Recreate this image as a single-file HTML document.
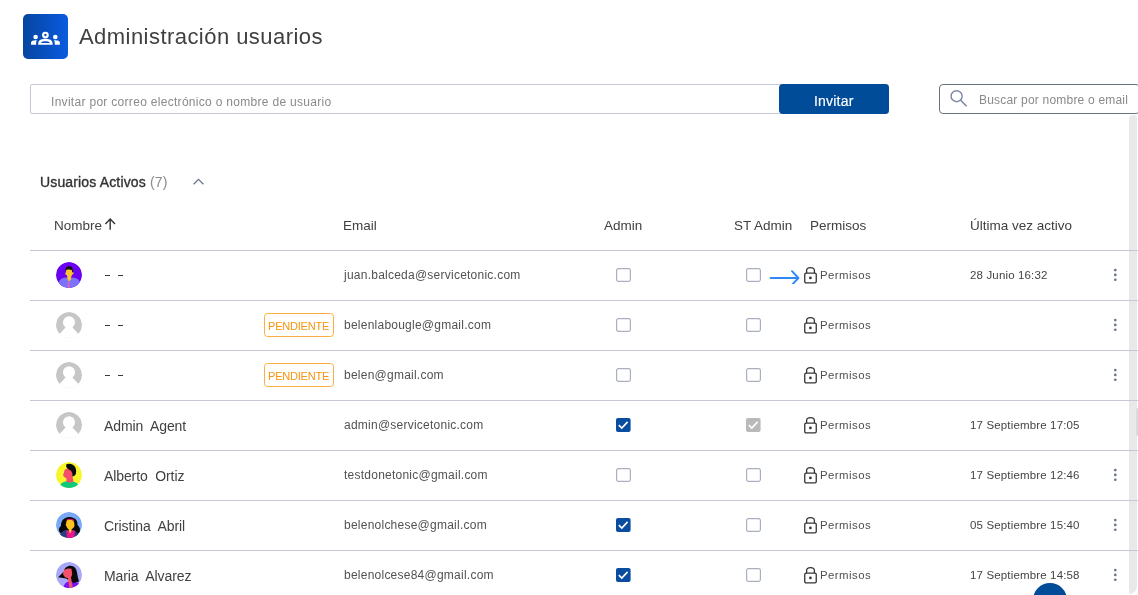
<!DOCTYPE html>
<html><head><meta charset="utf-8">
<style>
html,body{margin:0;padding:0;background:#fff;}
body{width:1138px;height:595px;overflow:hidden;position:relative;font-family:"Liberation Sans",sans-serif;color:#414141;}
.a{position:absolute;}
.t{position:absolute;line-height:1;white-space:pre;will-change:transform;}
.logo{left:23px;top:13.5px;width:45px;height:45px;border-radius:5px;background:linear-gradient(90deg,#0645a0,#0b5be0);}
.inp{left:30px;top:84px;width:857px;height:28px;border:1px solid #c5c9d6;border-radius:2px;}
.btn{left:779px;top:84px;width:110px;height:30px;background:#004c99;border-radius:4px;}
.srch{left:939px;top:84px;width:199px;height:28px;border:1px solid #6b7283;border-radius:4px;}
.thumb{left:1129px;top:115px;width:8px;height:479px;background:#e9e9e9;border-radius:4px 4px 8px 0;}
.line{position:absolute;left:30px;width:1108px;height:1px;background:#c6c8d3;}
.cb{position:absolute;width:12px;height:12px;border:1px solid #b3b9c6;border-radius:2px;background:#fff;}
.badge{position:absolute;width:68px;height:22px;border:1px solid #fdae40;border-radius:3.5px;}
.keb{position:absolute;width:2.6px;height:2.6px;border-radius:50%;background:#66728a;box-shadow:0 4.8px 0 #66728a,0 9.6px 0 #66728a;}
</style></head>
<body>
<div class="a logo"></div>
<svg class="a" style="left:23px;top:13.5px" width="45" height="45" viewBox="0 0 45 45"><g fill="#fff"><circle cx="22.4" cy="21.05" r="2.3" fill="none" stroke="#fff" stroke-width="2.2"/><circle cx="12.6" cy="23" r="2.3"/><circle cx="32.3" cy="23" r="2.3"/><path fill-rule="evenodd" d="M15.2,30.85 V29.4 C15.2,27.5 16.5,26.3 18,25.6 C19.4,25 20.8,24.75 22.4,24.75 C24,24.75 25.4,25 26.8,25.6 C28.3,26.3 29.6,27.5 29.6,29.4 V30.85 Z M17.9,29 C18.2,28.3 18.8,27.9 19.9,27.5 C20.7,27.25 21.5,27.15 22.4,27.15 C23.3,27.15 24.1,27.25 24.9,27.5 C26,27.9 26.6,28.3 26.9,29 Z"/><path d="M8,30.85 V29 C8,28 8.6,27.2 9.5,26.8 C10.5,26.4 11.5,26.2 12.6,26.2 C13.1,26.2 13.5,26.25 13.9,26.3 C13.4,27.1 13.1,28 13.1,29 V30.85 Z"/><path d="M36.9,30.85 V29 C36.9,28 36.3,27.2 35.4,26.8 C34.4,26.4 33.4,26.2 32.3,26.2 C31.8,26.2 31.4,26.25 31,26.3 C31.5,27.1 31.8,28 31.8,29 V30.85 Z"/></g></svg>
<div class="t" style="left:79px;top:26.4px;font-size:22px;color:#404040;letter-spacing:0.45px;">Administración usuarios</div>

<div class="a inp"></div>
<div class="t" style="left:51px;top:95.8px;font-size:12px;color:#8a8a8a;letter-spacing:0.3px;">Invitar por correo electrónico o nombre de usuario</div>
<div class="a btn"></div>
<div class="t" style="left:814px;top:93.5px;font-size:14px;color:#fff;-webkit-text-stroke:0.15px #fff;letter-spacing:0.2px;">Invitar</div>

<div class="a srch"></div>
<svg class="a" style="left:948px;top:88px" width="22" height="20" viewBox="0 0 22 20"><circle cx="8.6" cy="8.2" r="5.5" fill="none" stroke="#7b879e" stroke-width="1.4"/><path d="M12.6,12.3 L18.6,18.2" stroke="#7b879e" stroke-width="1.6"/></svg>
<div class="t" style="left:979px;top:94px;font-size:12px;color:#8a8a8a;letter-spacing:0.2px;">Buscar por nombre o email</div>

<div class="a thumb"></div>

<div class="t" style="left:40px;top:175px;font-size:14px;color:#333;letter-spacing:0.15px;"><span style="-webkit-text-stroke:0.35px #333">Usuarios Activos</span> <span style="color:#8a8a8a">(7)</span></div>
<svg class="a" style="left:192px;top:177px" width="13" height="9" viewBox="0 0 13 9"><path d="M1.6,7.2 L6.5,2.3 L11.4,7.2" fill="none" stroke="#6b7591" stroke-width="1.3"/></svg>

<div class="t" style="left:54px;top:219px;font-size:13.5px;">Nombre</div>
<svg class="a" style="left:103px;top:217px" width="14" height="14" viewBox="0 0 14 14"><path d="M7.2,12.8 V2.2 M2.4,6.9 L7.2,2.1 L12,6.9" fill="none" stroke="#333" stroke-width="1.4"/></svg>
<div class="t" style="left:343px;top:219px;font-size:13.5px;">Email</div>
<div class="t" style="left:604px;top:219px;font-size:13.5px;">Admin</div>
<div class="t" style="left:734px;top:219px;font-size:13.5px;">ST Admin</div>
<div class="t" style="left:809.5px;top:219px;font-size:13.5px;">Permisos</div>
<div class="t" style="left:970px;top:219px;font-size:13.5px;">Última vez activo</div>

<div class="line" style="top:250px"></div>
<div class="line" style="top:300px"></div>
<div class="line" style="top:350px"></div>
<div class="line" style="top:400px"></div>
<div class="line" style="top:450px"></div>
<div class="line" style="top:500px"></div>
<div class="line" style="top:550px"></div>

<svg class="a" style="left:56px;top:262px" width="26" height="26" viewBox="0 0 26 26"><defs><clipPath id="cp1275"><circle cx="13" cy="13" r="13"/></clipPath></defs><g clip-path="url(#cp1275)"><circle cx="13" cy="13" r="13" fill="#6c00f3"/><path d="M2.5,27 L2.8,21 C3.2,17.5 6,15.6 10,15.4 L16,15.4 C20.5,15.6 23.6,17.5 24,21 L24.3,27 Z" fill="#7b73f8"/><path d="M11.2,12.5 L15.2,12.5 L15,17.5 L12.8,19.5 L11.4,17 Z" fill="#fcc42d"/><path d="M10,8 C10,6.8 11.5,6 13,6 L16.6,6.4 L17,10 C17.8,10.2 18,11.2 17,12.3 L16.2,12.8 C16,14 15,14.8 13.5,14.8 C12.5,14.8 12,14.6 11.5,14.2 L11.2,13.3 L10,13 C9,12.2 9.2,11 10,10.3 Z" fill="#fcc42d"/><path d="M9.3,8.2 C9.2,5.5 11,4.2 13.2,4.2 C15.5,4.2 17.2,5.6 17,8.5 L16.9,10.6 L16.2,10.6 L15.8,8 C14.5,7.4 12.5,7.3 10.5,7.8 L10,9 Z" fill="#111"/><path d="M11.8,19.8 L13.3,19.8 L13.6,27 L11.6,27 Z" fill="#f05cc0"/></g></svg>
<div class="a" style="left:104.6px;top:275px;width:5.4px;height:1.2px;background:#3a3a3a"></div>
<div class="a" style="left:118px;top:275px;width:5.4px;height:1.2px;background:#3a3a3a"></div>
<div class="t" style="left:344px;top:268.6px;font-size:12px;color:#525252;letter-spacing:0.24px;">juan.balceda@servicetonic.com</div>
<svg class="a" style="left:616px;top:268px" width="15" height="14" viewBox="0 0 15 14"><rect x="0.6" y="0.6" width="13.8" height="12.8" rx="1.8" fill="#fff" stroke="#a9b0be" stroke-width="1.2"/></svg>
<svg class="a" style="left:746px;top:268px" width="15" height="14" viewBox="0 0 15 14"><rect x="0.6" y="0.6" width="13.8" height="12.8" rx="1.8" fill="#fff" stroke="#a9b0be" stroke-width="1.2"/></svg>
<svg class="a" style="left:768px;top:270px" width="34" height="14" viewBox="0 0 34 14"><path d="M2.6,8 H30.2 M24,1.2 L30.4,8 L24,14.8" fill="none" stroke="#2f88f8" stroke-width="1.9" stroke-linecap="round" stroke-linejoin="round"/></svg>
<svg class="a" style="left:804px;top:265.6px" width="14" height="18" viewBox="0 0 14 18"><rect x="0.75" y="7.1" width="11.5" height="9.7" rx="1.3" fill="none" stroke="#333" stroke-width="1.3"/><path d="M2.6,7.1 V4.6 C2.6,2.6 4.1,1.55 6.5,1.55 C8.9,1.55 10.4,2.6 10.4,4.6 V7.1" fill="none" stroke="#333" stroke-width="1.3"/><circle cx="6.4" cy="11.9" r="1.35" fill="#333"/></svg>
<div class="t" style="left:820px;top:269.5px;font-size:11.4px;color:#4e4e4e;letter-spacing:0.45px;">Permisos</div>
<div class="t" style="left:970px;top:270px;font-size:11.5px;color:#444;letter-spacing:0.15px;">28 Junio 16:32</div>
<svg class="a" style="left:1110px;top:265px" width="10" height="20" viewBox="0 0 10 20"><g fill="#6a758c"><circle cx="5.3" cy="5.1" r="1.35"/><circle cx="5.3" cy="9.95" r="1.35"/><circle cx="5.3" cy="14.75" r="1.35"/></g></svg>
<svg class="a" style="left:56px;top:312px" width="26" height="26" viewBox="0 0 26 26"><defs><clipPath id="cg325"><circle cx="13" cy="13" r="13"/></clipPath></defs><g clip-path="url(#cg325)"><circle cx="13" cy="13" r="13" fill="#c6c6c6"/><circle cx="13" cy="10.2" r="6" fill="#fff"/><path d="M10,14.6 C8.6,17.4 5.6,19.3 3.2,22.4 L2.6,27 L23.4,27 L22.8,22.4 C20.4,19.3 17.4,17.4 16,14.6 Z" fill="#fff"/></g></svg>
<div class="a" style="left:104.6px;top:325px;width:5.4px;height:1.2px;background:#3a3a3a"></div>
<div class="a" style="left:118px;top:325px;width:5.4px;height:1.2px;background:#3a3a3a"></div>
<div class="badge" style="left:264px;top:313px"></div>
<div class="t" style="left:268px;top:320.5px;font-size:11px;color:#f7940c;letter-spacing:-0.2px;">PENDIENTE</div>
<div class="t" style="left:344px;top:318.6px;font-size:12px;color:#525252;letter-spacing:0.24px;">belenlabougle@gmail.com</div>
<svg class="a" style="left:616px;top:318px" width="15" height="14" viewBox="0 0 15 14"><rect x="0.6" y="0.6" width="13.8" height="12.8" rx="1.8" fill="#fff" stroke="#a9b0be" stroke-width="1.2"/></svg>
<svg class="a" style="left:746px;top:318px" width="15" height="14" viewBox="0 0 15 14"><rect x="0.6" y="0.6" width="13.8" height="12.8" rx="1.8" fill="#fff" stroke="#a9b0be" stroke-width="1.2"/></svg>
<svg class="a" style="left:804px;top:315.6px" width="14" height="18" viewBox="0 0 14 18"><rect x="0.75" y="7.1" width="11.5" height="9.7" rx="1.3" fill="none" stroke="#333" stroke-width="1.3"/><path d="M2.6,7.1 V4.6 C2.6,2.6 4.1,1.55 6.5,1.55 C8.9,1.55 10.4,2.6 10.4,4.6 V7.1" fill="none" stroke="#333" stroke-width="1.3"/><circle cx="6.4" cy="11.9" r="1.35" fill="#333"/></svg>
<div class="t" style="left:820px;top:319.5px;font-size:11.4px;color:#4e4e4e;letter-spacing:0.45px;">Permisos</div>
<svg class="a" style="left:1110px;top:315px" width="10" height="20" viewBox="0 0 10 20"><g fill="#6a758c"><circle cx="5.3" cy="5.1" r="1.35"/><circle cx="5.3" cy="9.95" r="1.35"/><circle cx="5.3" cy="14.75" r="1.35"/></g></svg>
<svg class="a" style="left:56px;top:362px" width="26" height="26" viewBox="0 0 26 26"><defs><clipPath id="cg375"><circle cx="13" cy="13" r="13"/></clipPath></defs><g clip-path="url(#cg375)"><circle cx="13" cy="13" r="13" fill="#c6c6c6"/><circle cx="13" cy="10.2" r="6" fill="#fff"/><path d="M10,14.6 C8.6,17.4 5.6,19.3 3.2,22.4 L2.6,27 L23.4,27 L22.8,22.4 C20.4,19.3 17.4,17.4 16,14.6 Z" fill="#fff"/></g></svg>
<div class="a" style="left:104.6px;top:375px;width:5.4px;height:1.2px;background:#3a3a3a"></div>
<div class="a" style="left:118px;top:375px;width:5.4px;height:1.2px;background:#3a3a3a"></div>
<div class="badge" style="left:264px;top:363px"></div>
<div class="t" style="left:268px;top:370.5px;font-size:11px;color:#f7940c;letter-spacing:-0.2px;">PENDIENTE</div>
<div class="t" style="left:344px;top:368.6px;font-size:12px;color:#525252;letter-spacing:0.24px;">belen@gmail.com</div>
<svg class="a" style="left:616px;top:368px" width="15" height="14" viewBox="0 0 15 14"><rect x="0.6" y="0.6" width="13.8" height="12.8" rx="1.8" fill="#fff" stroke="#a9b0be" stroke-width="1.2"/></svg>
<svg class="a" style="left:746px;top:368px" width="15" height="14" viewBox="0 0 15 14"><rect x="0.6" y="0.6" width="13.8" height="12.8" rx="1.8" fill="#fff" stroke="#a9b0be" stroke-width="1.2"/></svg>
<svg class="a" style="left:804px;top:365.6px" width="14" height="18" viewBox="0 0 14 18"><rect x="0.75" y="7.1" width="11.5" height="9.7" rx="1.3" fill="none" stroke="#333" stroke-width="1.3"/><path d="M2.6,7.1 V4.6 C2.6,2.6 4.1,1.55 6.5,1.55 C8.9,1.55 10.4,2.6 10.4,4.6 V7.1" fill="none" stroke="#333" stroke-width="1.3"/><circle cx="6.4" cy="11.9" r="1.35" fill="#333"/></svg>
<div class="t" style="left:820px;top:369.5px;font-size:11.4px;color:#4e4e4e;letter-spacing:0.45px;">Permisos</div>
<svg class="a" style="left:1110px;top:365px" width="10" height="20" viewBox="0 0 10 20"><g fill="#6a758c"><circle cx="5.3" cy="5.1" r="1.35"/><circle cx="5.3" cy="9.95" r="1.35"/><circle cx="5.3" cy="14.75" r="1.35"/></g></svg>
<svg class="a" style="left:56px;top:412px" width="26" height="26" viewBox="0 0 26 26"><defs><clipPath id="cg425"><circle cx="13" cy="13" r="13"/></clipPath></defs><g clip-path="url(#cg425)"><circle cx="13" cy="13" r="13" fill="#c6c6c6"/><circle cx="13" cy="10.2" r="6" fill="#fff"/><path d="M10,14.6 C8.6,17.4 5.6,19.3 3.2,22.4 L2.6,27 L23.4,27 L22.8,22.4 C20.4,19.3 17.4,17.4 16,14.6 Z" fill="#fff"/></g></svg>
<div class="t" style="left:104px;top:418.8px;font-size:14px;letter-spacing:-0.1px;">Admin  Agent</div>
<div class="t" style="left:344px;top:418.6px;font-size:12px;color:#525252;letter-spacing:0.24px;">admin@servicetonic.com</div>
<svg class="a" style="left:616px;top:418px" width="15" height="14" viewBox="0 0 15 14"><rect width="14.6" height="14" rx="2" fill="#0a4d9f"/><path d="M2.8,7.2 L5.8,10.1 L11.6,3.9" fill="none" stroke="#fff" stroke-width="1.6"/></svg>
<svg class="a" style="left:746px;top:418px" width="15" height="14" viewBox="0 0 15 14"><rect width="14.6" height="14" rx="2" fill="#b9b9b9"/><path d="M2.8,7.2 L5.8,10.1 L11.6,3.9" fill="none" stroke="#fff" stroke-width="1.6"/></svg>
<svg class="a" style="left:804px;top:415.6px" width="14" height="18" viewBox="0 0 14 18"><rect x="0.75" y="7.1" width="11.5" height="9.7" rx="1.3" fill="none" stroke="#333" stroke-width="1.3"/><path d="M2.6,7.1 V4.6 C2.6,2.6 4.1,1.55 6.5,1.55 C8.9,1.55 10.4,2.6 10.4,4.6 V7.1" fill="none" stroke="#333" stroke-width="1.3"/><circle cx="6.4" cy="11.9" r="1.35" fill="#333"/></svg>
<div class="t" style="left:820px;top:419.5px;font-size:11.4px;color:#4e4e4e;letter-spacing:0.45px;">Permisos</div>
<div class="t" style="left:970px;top:420px;font-size:11.5px;color:#444;letter-spacing:0.15px;">17 Septiembre 17:05</div>
<svg class="a" style="left:56px;top:462px" width="26" height="26" viewBox="0 0 26 26"><defs><clipPath id="cp5475"><circle cx="13" cy="13" r="13"/></clipPath></defs><g clip-path="url(#cp5475)"><circle cx="13" cy="13" r="13" fill="#f7f52b"/><path d="M3,27 C3.5,21.5 7,19 13,18.9 C19,19 23.5,21.5 24,27 Z" fill="#0fc97a"/><path d="M10.2,14.5 L16.5,14.5 L17.5,19.5 L14.5,20.8 L10.5,19.8 Z" fill="#f4506a"/><path d="M8.2,9 C9,6.8 11,6 13,6.2 C15.5,6.5 17,8.5 17,11.5 C17,14.5 15,16.3 12.5,16.3 C10.5,16.3 8.5,15.5 7.6,14.2 C6.8,13 7.2,11.5 8,10.8 Z" fill="#f4506a"/><path d="M10.2,2.6 C12.5,1 16,1.5 18.2,3.8 C20.2,6 20.6,9.5 19.8,12 C19.2,13.5 17.8,14.5 16.2,14.5 C16.8,12.2 16.5,9.5 14.2,8.2 C12.5,7.3 10.8,6.5 10.2,4.8 Z" fill="#0b0b0b"/></g></svg>
<div class="t" style="left:104px;top:468.8px;font-size:14px;letter-spacing:-0.1px;">Alberto  Ortiz</div>
<div class="t" style="left:344px;top:468.6px;font-size:12px;color:#525252;letter-spacing:0.24px;">testdonetonic@gmail.com</div>
<svg class="a" style="left:616px;top:468px" width="15" height="14" viewBox="0 0 15 14"><rect x="0.6" y="0.6" width="13.8" height="12.8" rx="1.8" fill="#fff" stroke="#a9b0be" stroke-width="1.2"/></svg>
<svg class="a" style="left:746px;top:468px" width="15" height="14" viewBox="0 0 15 14"><rect x="0.6" y="0.6" width="13.8" height="12.8" rx="1.8" fill="#fff" stroke="#a9b0be" stroke-width="1.2"/></svg>
<svg class="a" style="left:804px;top:465.6px" width="14" height="18" viewBox="0 0 14 18"><rect x="0.75" y="7.1" width="11.5" height="9.7" rx="1.3" fill="none" stroke="#333" stroke-width="1.3"/><path d="M2.6,7.1 V4.6 C2.6,2.6 4.1,1.55 6.5,1.55 C8.9,1.55 10.4,2.6 10.4,4.6 V7.1" fill="none" stroke="#333" stroke-width="1.3"/><circle cx="6.4" cy="11.9" r="1.35" fill="#333"/></svg>
<div class="t" style="left:820px;top:469.5px;font-size:11.4px;color:#4e4e4e;letter-spacing:0.45px;">Permisos</div>
<div class="t" style="left:970px;top:470px;font-size:11.5px;color:#444;letter-spacing:0.15px;">17 Septiembre 12:46</div>
<svg class="a" style="left:1110px;top:465px" width="10" height="20" viewBox="0 0 10 20"><g fill="#6a758c"><circle cx="5.3" cy="5.1" r="1.35"/><circle cx="5.3" cy="9.95" r="1.35"/><circle cx="5.3" cy="14.75" r="1.35"/></g></svg>
<svg class="a" style="left:56px;top:512px" width="26" height="26" viewBox="0 0 26 26"><defs><clipPath id="cp6525"><circle cx="13" cy="13" r="13"/></clipPath></defs><g clip-path="url(#cp6525)"><circle cx="13" cy="13" r="13" fill="#79a9f6"/><path d="M3.5,20 C2.2,17.5 3.5,15 5,13.8 C4.8,10.5 6.5,7 9.5,6 C11.5,4.8 15,4.6 17.5,6 C20.5,7 21.8,10 21.5,13 C23.5,14.5 24.8,17.5 23.5,20.5 L21,22.5 L6,22.5 Z" fill="#080808"/><path d="M3,27 C3.5,21.5 6.5,18.5 10,17.9 L16.5,17.9 C20,18.5 23,21.5 23.6,27 Z" fill="#293f7c"/><path d="M10.5,18.5 L18.9,18.5 L18.2,27 L11,27 Z" fill="#f0148c"/><path d="M11.5,7.5 C14,6.8 17.5,7.8 18.2,10.5 L18.5,13.5 C18.2,15.5 17,16.5 15.8,17 L15.2,20 L13.8,21.5 L12.8,17.5 C11.5,16.8 10.5,15.2 10.2,13.5 C9.6,13.2 9.6,12 10.2,11.5 C10.2,9.5 10.6,8.2 11.5,7.5 Z" fill="#fcc21e"/><path d="M10.8,7.4 C13,6.2 16.5,6.4 18.5,8.2 L18,9 C16,7.6 13.2,7.4 11,8.4 Z" fill="#e0107a"/></g></svg>
<div class="t" style="left:104px;top:518.8px;font-size:14px;letter-spacing:-0.1px;">Cristina  Abril</div>
<div class="t" style="left:344px;top:518.6px;font-size:12px;color:#525252;letter-spacing:0.24px;">belenolchese@gmail.com</div>
<svg class="a" style="left:616px;top:518px" width="15" height="14" viewBox="0 0 15 14"><rect width="14.6" height="14" rx="2" fill="#0a4d9f"/><path d="M2.8,7.2 L5.8,10.1 L11.6,3.9" fill="none" stroke="#fff" stroke-width="1.6"/></svg>
<svg class="a" style="left:746px;top:518px" width="15" height="14" viewBox="0 0 15 14"><rect x="0.6" y="0.6" width="13.8" height="12.8" rx="1.8" fill="#fff" stroke="#a9b0be" stroke-width="1.2"/></svg>
<svg class="a" style="left:804px;top:515.6px" width="14" height="18" viewBox="0 0 14 18"><rect x="0.75" y="7.1" width="11.5" height="9.7" rx="1.3" fill="none" stroke="#333" stroke-width="1.3"/><path d="M2.6,7.1 V4.6 C2.6,2.6 4.1,1.55 6.5,1.55 C8.9,1.55 10.4,2.6 10.4,4.6 V7.1" fill="none" stroke="#333" stroke-width="1.3"/><circle cx="6.4" cy="11.9" r="1.35" fill="#333"/></svg>
<div class="t" style="left:820px;top:519.5px;font-size:11.4px;color:#4e4e4e;letter-spacing:0.45px;">Permisos</div>
<div class="t" style="left:970px;top:520px;font-size:11.5px;color:#444;letter-spacing:0.15px;">05 Septiembre 15:40</div>
<svg class="a" style="left:1110px;top:515px" width="10" height="20" viewBox="0 0 10 20"><g fill="#6a758c"><circle cx="5.3" cy="5.1" r="1.35"/><circle cx="5.3" cy="9.95" r="1.35"/><circle cx="5.3" cy="14.75" r="1.35"/></g></svg>
<svg class="a" style="left:56px;top:562px" width="26" height="26" viewBox="0 0 26 26"><defs><clipPath id="cp7575"><circle cx="13" cy="13" r="13"/></clipPath></defs><g clip-path="url(#cp7575)"><circle cx="13" cy="13" r="13" fill="#a8a7f8"/><path d="M7.1,27 C7.5,23 9.5,20 13,19.2 C17,19 22,20 24,22 L24,27 Z" fill="#7a12f2"/><path d="M2.1,15.2 L8,9.5 C8.5,6 11,3.8 14.5,3.8 C18.5,3.8 20.5,7 21,10.5 C21.5,13.5 22,16.5 23,19.4 L17.5,21 L10,16.5 Z" fill="#0a0a0a"/><path d="M7.6,9.5 C8.5,7 11,6.4 13,6.5 L15.5,6.8 L16.2,12.5 L15,15.5 L16.9,26.5 L13.5,27 L11.8,16 C9.5,15.8 7.8,14.5 7.2,12.5 C7,11.2 7.2,10.2 7.6,9.5 Z" fill="#f4506a"/></g></svg>
<div class="t" style="left:104px;top:568.8px;font-size:14px;letter-spacing:-0.1px;">Maria  Alvarez</div>
<div class="t" style="left:344px;top:568.6px;font-size:12px;color:#525252;letter-spacing:0.24px;">belenolcese84@gmail.com</div>
<svg class="a" style="left:616px;top:568px" width="15" height="14" viewBox="0 0 15 14"><rect width="14.6" height="14" rx="2" fill="#0a4d9f"/><path d="M2.8,7.2 L5.8,10.1 L11.6,3.9" fill="none" stroke="#fff" stroke-width="1.6"/></svg>
<svg class="a" style="left:746px;top:568px" width="15" height="14" viewBox="0 0 15 14"><rect x="0.6" y="0.6" width="13.8" height="12.8" rx="1.8" fill="#fff" stroke="#a9b0be" stroke-width="1.2"/></svg>
<svg class="a" style="left:804px;top:565.6px" width="14" height="18" viewBox="0 0 14 18"><rect x="0.75" y="7.1" width="11.5" height="9.7" rx="1.3" fill="none" stroke="#333" stroke-width="1.3"/><path d="M2.6,7.1 V4.6 C2.6,2.6 4.1,1.55 6.5,1.55 C8.9,1.55 10.4,2.6 10.4,4.6 V7.1" fill="none" stroke="#333" stroke-width="1.3"/><circle cx="6.4" cy="11.9" r="1.35" fill="#333"/></svg>
<div class="t" style="left:820px;top:569.5px;font-size:11.4px;color:#4e4e4e;letter-spacing:0.45px;">Permisos</div>
<div class="t" style="left:970px;top:570px;font-size:11.5px;color:#444;letter-spacing:0.15px;">17 Septiembre 14:58</div>
<svg class="a" style="left:1110px;top:565px" width="10" height="20" viewBox="0 0 10 20"><g fill="#6a758c"><circle cx="5.3" cy="5.1" r="1.35"/><circle cx="5.3" cy="9.95" r="1.35"/><circle cx="5.3" cy="14.75" r="1.35"/></g></svg>

<div class="a" style="left:1136.4px;top:408px;width:2px;height:28px;background:#dadada;border-radius:2px 0 0 2px;"></div>
<div class="a" style="left:1033px;top:583.3px;width:34px;height:34px;border-radius:50%;background:#004c99;"></div>
</body></html>
